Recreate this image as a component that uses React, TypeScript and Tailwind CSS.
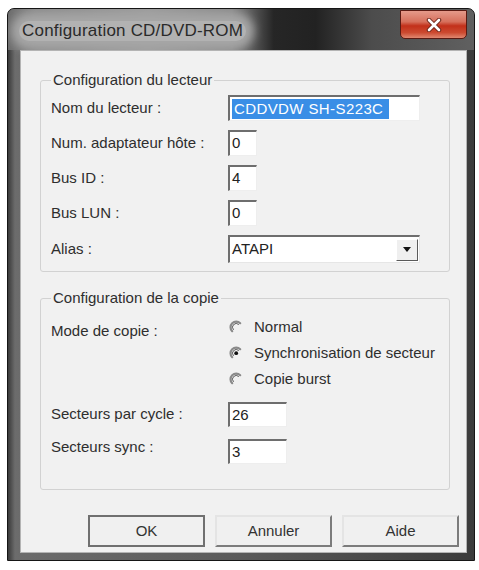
import React from 'react';

const font = { fontFamily: '"Liberation Sans", Arial, sans-serif' };

// boîte de saisie enfoncée, style Windows classique
const Field = ({ w, children }: { w: string; children?: React.ReactNode }) => (
  <div
    className={`${w} h-[26px] flex items-center bg-white border-t-2 border-l-2 border-r border-b border-t-[#6e6e6e] border-l-[#6e6e6e] border-r-[#eeeeee] border-b-[#eeeeee] pl-[2px] text-[15px] text-[#222]`}
  >
    {children}
  </div>
);

const Radio = ({ checked, label }: { checked?: boolean; label: string }) => (
  <div className="h-[26px] flex items-center">
    <svg width="14" height="14" viewBox="0 0 14 14" className="ml-[1px] mr-[11px]">
      <path d="M3.2 11.2 A5.4 5.4 0 0 1 11.2 3.2" fill="none" stroke="#8a8a8a" strokeWidth="2.2" strokeLinecap="round" />
      <path d="M4.6 9.8 A3.6 3.6 0 0 1 9.8 4.6" fill="none" stroke="#4a4a4a" strokeWidth="0.9" />
      {checked && <circle cx="7.2" cy="7.2" r="1.9" fill="#111" />}
    </svg>
    <span>{label}</span>
  </div>
);

const Row = ({ label, children, h = 'h-[26px]' }: { label: string; children: React.ReactNode; h?: string }) => (
  <div className={`grid grid-cols-[177px_1fr] items-center ${h}`}>
    <span>{label}</span>
    <div>{children}</div>
  </div>
);

const App: React.FC = () => {
  return (
    <div className="w-[479px] h-[570px] bg-white pt-[8px] pl-[7px] pr-[4px] pb-[9px] flex" style={font}>
      <div className="flex-1 flex flex-col rounded-t-[7px] border border-[#161616] bg-[linear-gradient(90deg,#3a3a3a_0%,#6c6c6c_1.5%,#5a5a5a_50%,#3c3c3c_100%)] overflow-hidden">
        {/* Barre de titre */}
        <div className="h-[41px] flex items-center justify-between bg-[linear-gradient(90deg,#6c6c6c_0%,#8a8a8a_6%,#9c9c9c_30%,#8a8a8a_48%,#262626_57%,#222222_66%,#4c4c4c_78%,#606060_100%)]">
          <span className="ml-[11px] mt-[2px] px-[3px] rounded-[12px] bg-[#b2b2b2] shadow-[0_0_10px_8px_#a6a6a6] text-[17px] text-[#2a2a2a] leading-[20px] tracking-[0.2px]">
            Configuration CD/DVD-ROM
          </span>
          <div className="self-start mt-[1px] mr-[7px] w-[67px] h-[29px] rounded-b-[5px] border border-[#5a1a12] bg-[linear-gradient(180deg,#e59a8a_0%,#d6705c_40%,#c2301a_55%,#cc4a30_80%,#e08870_100%)] flex items-center justify-center">
            <svg width="16" height="14" viewBox="0 0 16 14">
              <path d="M3 2 L13 12 M13 2 L3 12" stroke="#6a2418" strokeWidth="4.5" strokeLinecap="round" />
              <path d="M3 2 L13 12 M13 2 L3 12" stroke="#ffffff" strokeWidth="2.6" strokeLinecap="round" />
            </svg>
          </div>
        </div>

        {/* Zone client */}
        <div className="flex-1 ml-[12px] mr-[7px] mb-[7px] bg-[#f1f1f1] border border-[#b4b4b4] pt-[21px] pl-[19px] pr-[16px] text-[15px] text-[#2e2e2e] flex flex-col">
          <fieldset className="border border-[#d2d2d2] rounded-[3px] pl-[10px] pr-[10px] pb-[8px]">
            <legend className="px-[2px] leading-[16px]">Configuration du lecteur</legend>
            <div className="flex flex-col gap-[9px] pt-[7px]">
              <Row label="Nom du lecteur :">
                <Field w="w-[192px]">
                  <span className="bg-[#3a8ee6] text-white px-[2px] pr-[6px] tracking-[0.4px] leading-[20px]">CDDVDW SH-S223C</span>
                </Field>
              </Row>
              <Row label="Num. adaptateur hôte :">
                <Field w="w-[29px]">0</Field>
              </Row>
              <Row label="Bus ID :">
                <Field w="w-[29px]">4</Field>
              </Row>
              <Row label="Bus LUN :">
                <Field w="w-[29px]">0</Field>
              </Row>
              <Row label="Alias :" h="h-[28px]">
                <div className="w-[192px] h-[28px] flex items-center bg-white border-t-2 border-l-2 border-r border-b border-t-[#6e6e6e] border-l-[#6e6e6e] border-r-[#e6e6e6] border-b-[#e6e6e6] pl-[2px] text-[#222]">
                  <span className="flex-1">ATAPI</span>
                  <div className="w-[22px] h-[22px] mr-[1px] bg-[#efefef] border border-t-white border-l-white border-r-[#5a5a5a] border-b-[#5a5a5a] flex items-center justify-center">
                    <svg width="8" height="5" viewBox="0 0 8 5">
                      <path d="M0 0 H8 L4 5 Z" fill="#111" />
                    </svg>
                  </div>
                </div>
              </Row>
            </div>
          </fieldset>

          <fieldset className="mt-[18px] border border-[#d2d2d2] rounded-[3px] pl-[10px] pr-[10px] pb-[25px]">
            <legend className="px-[2px] leading-[16px]">Configuration de la copie</legend>
            <div className="grid grid-cols-[177px_1fr] pt-[8px]">
              <span className="pt-[6px]">Mode de copie :</span>
              <div className="flex flex-col">
                <Radio label="Normal" />
                <Radio label="Synchronisation de secteur" checked />
                <Radio label="Copie burst" />
              </div>
            </div>
            <div className="flex flex-col gap-[12px] mt-[10px]">
              <Row label="Secteurs par cycle :" h="h-[25px]">
                <Field w="w-[59px] !h-[25px]">26</Field>
              </Row>
              <div className="grid grid-cols-[177px_1fr] h-[25px]">
                <span className="leading-[16px]">Secteurs sync :</span>
                <Field w="w-[59px] !h-[25px]">3</Field>
              </div>
            </div>
          </fieldset>

          <div className="mt-[25px] -mr-[9px] flex justify-end gap-[10px]">
            <button className="w-[117px] h-[32px] bg-[#f0f0f0] border-2 border-[#707070] text-[#333]">OK</button>
            <button className="w-[117px] h-[32px] bg-[#f0f0f0] border-2 border-t-[#e4e4e4] border-l-[#e4e4e4] border-r-[#7c7c7c] border-b-[#7c7c7c] text-[#333]">
              Annuler
            </button>
            <button className="w-[117px] h-[32px] bg-[#f0f0f0] border-2 border-t-[#e4e4e4] border-l-[#e4e4e4] border-r-[#7c7c7c] border-b-[#7c7c7c] text-[#333]">
              Aide
            </button>
          </div>
        </div>
      </div>
    </div>
  );
};

export default App;
